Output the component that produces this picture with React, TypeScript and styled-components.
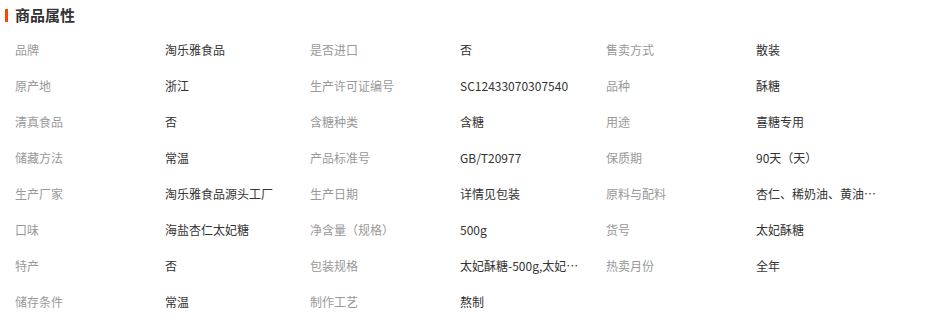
import { FC } from "react";
import styled, { createGlobalStyle } from "styled-components";

const GlobalStyle = createGlobalStyle`
  body {
    margin: 0;
    background: #fff;
    font-family: "Microsoft YaHei", "Noto Sans CJK SC", "Noto Sans", sans-serif;
  }
`;

const Wrapper = styled.div`
  width: 934px;
  height: 333px;
  background: #fff;
`;

const Header = styled.div`
  display: flex;
  align-items: center;
  height: 31px;
  padding-left: 5px;
  padding-bottom: 1px;
  box-sizing: border-box;
`;

const HeaderBar = styled.div`
  width: 3px;
  height: 13px;
  background: #ff4400;
  margin-right: 7px;
`;

const Title = styled.h3`
  margin: 0;
  font-size: 15px;
  font-weight: bold;
  color: #333;
  line-height: 20px;
`;

const Grid = styled.div`
  display: grid;
  grid-template-columns: 295px 296px 296px;
  grid-auto-rows: 36px;
  padding-left: 15px;
`;

const Item = styled.div`
  display: flex;
  align-items: center;
  font-size: 12px;
`;

const Label = styled.span`
  width: 150px;
  flex-shrink: 0;
  color: #999;
`;

const Value = styled.span`
  max-width: 121px;
  color: #333;
  white-space: nowrap;
  overflow: hidden;
  text-overflow: ellipsis;
`;

const attributes: [string, string][] = [
  ["品牌", "淘乐雅食品"],
  ["是否进口", "否"],
  ["售卖方式", "散装"],
  ["原产地", "浙江"],
  ["生产许可证编号", "SC12433070307540"],
  ["品种", "酥糖"],
  ["清真食品", "否"],
  ["含糖种类", "含糖"],
  ["用途", "喜糖专用"],
  ["储藏方法", "常温"],
  ["产品标准号", "GB/T20977"],
  ["保质期", "90天（天）"],
  ["生产厂家", "淘乐雅食品源头工厂"],
  ["生产日期", "详情见包装"],
  ["原料与配料", "杏仁、稀奶油、黄油、白砂糖"],
  ["口味", "海盐杏仁太妃糖"],
  ["净含量（规格）", "500g"],
  ["货号", "太妃酥糖"],
  ["特产", "否"],
  ["包装规格", "太妃酥糖-500g,太妃酥糖-1000g"],
  ["热卖月份", "全年"],
  ["储存条件", "常温"],
  ["制作工艺", "熬制"],
];

export const App: FC = () => {
  return (
    <Wrapper>
      <GlobalStyle />
      <Header>
        <HeaderBar />
        <Title>商品属性</Title>
      </Header>
      <Grid>
        {attributes.map(([label, value]) => (
          <Item key={label}>
            <Label>{label}</Label>
            <Value title={value}>{value}</Value>
          </Item>
        ))}
      </Grid>
    </Wrapper>
  );
};

export default App;
